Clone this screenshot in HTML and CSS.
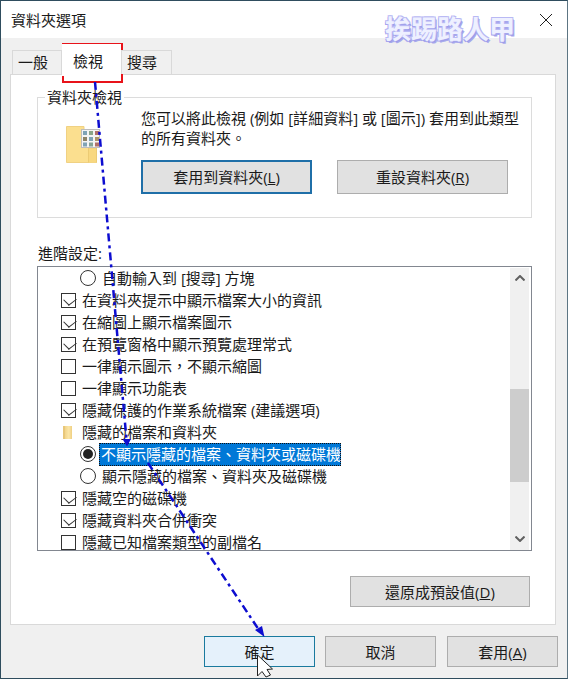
FILE: index.html
```html
<!DOCTYPE html>
<html lang="zh-Hant">
<head>
<meta charset="utf-8">
<title>資料夾選項</title>
<link rel="stylesheet" href="styles.css">
</head>
<body>
<div class="window">
  <header class="titlebar">
    <span class="title">資料夾選項</span>
    <svg class="close" width="14" height="14" viewBox="0 0 14 14"><path d="M1 1L13 13M13 1L1 13" stroke="#222" stroke-width="1" fill="none"/></svg>
  </header>
  <div class="client">
    <div class="tabs">
      <div class="tab">一般</div>
      <div class="tab active">檢視</div>
      <div class="tab">搜尋</div>
    </div>
    <div class="panel">
      <fieldset class="group">
        <legend>資料夾檢視</legend>
        <div class="group-inner">
          <svg class="folder-icon" width="35" height="37" viewBox="0 0 35 37">
            <path d="M0.500 0.500H18V6H30.500V36.500H0.500Z" fill="#fbdf8f" stroke="#f0d183"/>
            <path d="M22.500 36.500V22H30.500V36.500" fill="#f8d880" stroke="#eccb74"/>
            <rect x="15.500" y="3.500" width="18" height="18" fill="#f4f4f4" stroke="#bdbdbd"/>
            <rect x="17" y="5" width="4" height="4" fill="#7fa3b5"/><rect x="23" y="5" width="4" height="4" fill="#8aa588"/><rect x="29" y="5" width="4" height="4" fill="#b0706a"/>
            <rect x="17" y="11" width="4" height="4" fill="#8d8468"/><rect x="23" y="11" width="4" height="4" fill="#7fa3b5"/><rect x="29" y="11" width="4" height="4" fill="#ad9468"/>
            <rect x="17" y="16.500" width="4" height="4" fill="#7fa3b5"/><rect x="23" y="16.500" width="4" height="4" fill="#84a396"/><rect x="29" y="16.500" width="4" height="4" fill="#b0706a"/>
          </svg>
          <div class="group-main">
            <p class="desc">您可以將此檢視 (例如 [詳細資料] 或 [圖示]) 套用到此類型<br>的所有資料夾。</p>
            <div class="group-buttons">
              <button class="btn btn-wide btn-default">套用到資料夾(<u>L</u>)</button>
              <button class="btn btn-wide">重設資料夾(<u>R</u>)</button>
            </div>
          </div>
        </div>
      </fieldset>
      <div class="adv-label">進階設定:</div>
      <div class="list">
        <div class="rows">
          <div class="row level2"><span class="radio"></span><span>自動輸入到 [搜尋] 方塊</span></div>
          <div class="row"><span class="check on"></span><span>在資料夾提示中顯示檔案大小的資訊</span></div>
          <div class="row"><span class="check on"></span><span>在縮圖上顯示檔案圖示</span></div>
          <div class="row"><span class="check on"></span><span>在預覽窗格中顯示預覽處理常式</span></div>
          <div class="row"><span class="check"></span><span>一律顯示圖示，不顯示縮圖</span></div>
          <div class="row"><span class="check"></span><span>一律顯示功能表</span></div>
          <div class="row"><span class="check on"></span><span>隱藏保護的作業系統檔案 (建議選項)</span></div>
          <div class="row"><span class="mini-folder"></span><span>隱藏的檔案和資料夾</span></div>
          <div class="row level2"><span class="radio on"></span><span class="selected">不顯示隱藏的檔案、資料夾或磁碟機</span></div>
          <div class="row level2"><span class="radio"></span><span>顯示隱藏的檔案、資料夾及磁碟機</span></div>
          <div class="row"><span class="check on"></span><span>隱藏空的磁碟機</span></div>
          <div class="row"><span class="check on"></span><span>隱藏資料夾合併衝突</span></div>
          <div class="row"><span class="check"></span><span>隱藏已知檔案類型的副檔名</span></div>
        </div>
        <div class="scrollbar">
          <svg class="arrow" width="10" height="6" viewBox="0 0 10 6"><path d="M0.500 5.500L5 1L9.500 5.500" stroke="#606060" stroke-width="2" fill="none"/></svg>
          <div class="track"><div class="thumb"></div></div>
          <svg class="arrow" width="10" height="6" viewBox="0 0 10 6"><path d="M0.500 0.500L5 5L9.500 0.500" stroke="#606060" stroke-width="2" fill="none"/></svg>
        </div>
      </div>
      <div class="restore-row">
        <button class="btn btn-restore">還原成預設值(<u>D</u>)</button>
      </div>
    </div>
    <div class="actions">
      <button class="btn btn-act btn-hover">確定</button>
      <button class="btn btn-act">取消</button>
      <button class="btn btn-act">套用(<u>A</u>)</button>
    </div>
  </div>
</div>

<div class="watermark">挨踢路人甲</div>
<div class="red-box"></div>
<svg class="annot" width="568" height="679" viewBox="0 0 568 679">
  <path d="M95 82L126.500 440" class="dash"/>
  <path d="M122.500 439L127 446.500L131 439Z" fill="#0d0dd0"/>
  <path d="M148 463L259 630" class="dash"/>
  <path d="M255 630L264.500 637L262 626Z" fill="#0d0dd0"/>
  <path d="M257.500 655V676L262 671.500L266 677L270.500 675L267 669.500L272.500 669Z" fill="#fff" stroke="#222" stroke-width="1" stroke-linejoin="round"/>
</svg>
</body>
</html>
```

FILE: styles.css
```css
* { box-sizing: border-box; }
html, body { margin: 0; padding: 0; }
body {
  position: relative;
  width: 568px;
  height: 679px;
  overflow: hidden;
  background: #fff;
  color: #1a1a1a;
  font-family: "Open Sans", "Noto Sans CJK TC", "Liberation Sans", sans-serif;
  font-size: 15px;
  line-height: 20px;
}
.window {
  width: 568px;
  height: 679px;
  display: flex;
  flex-direction: column;
  border: 1px solid #2f4d5e;
  border-right-color: #5d7583;
}
.titlebar {
  height: 37px;
  flex: none;
  background: #fff;
  display: flex;
  align-items: center;
  justify-content: space-between;
  padding: 0 14px 0 10px;
}
.close { display: block; }
.client {
  flex: 1;
  background: #f0f0f0;
  display: flex;
  flex-direction: column;
  padding: 0 9px 0 9px;
}
.tabs {
  display: flex;
  height: 36px;
  padding: 12px 0 0 2px;
  flex: none;
  position: relative;
  z-index: 1;
}
.tab {
  height: 24px;
  width: 51px;
  background: #f0f0f0;
  border: 1px solid #d9d9d9;
  border-bottom: none;
  padding-left: 5px;
  line-height: 23px;
}
.tab:first-child { width: 50px; }
.tab.active {
  width: 59px;
  height: 32px;
  margin-top: -6px;
  background: #fff;
  border: none;
  padding-left: 11px;
  line-height: 34px;
}
.panel {
  width: 546px;
  height: 551px;
  flex: none;
  background: #fff;
  border: 1px solid #d9d9d9;
  padding: 15px 23px 0 26px;
  display: flex;
  flex-direction: column;
}
.group {
  margin: 0;
  padding: 0;
  height: 128px;
  flex: none;
  border: 1px solid #dcdcdc;
  min-width: 0;
}
.group legend {
  margin-left: 7px;
  padding: 0 2px;
  line-height: 14px;
  height: 14px;
}
.group-inner {
  display: flex;
  padding: 4px 0 0 0;
}
.folder-icon { flex: none; margin: 18px 0 0 28px; overflow: visible; }
.group-main { margin-left: 40px; }
.desc { margin: 0; line-height: 20px; white-space: nowrap; }
.group-buttons { display: flex; gap: 25px; margin-top: 12px; }
.btn {
  font: inherit;
  color: #1a1a1a;
  background: #e1e1e1;
  border: 1px solid #adadad;
  padding: 0;
  margin: 0;
  display: block;
}
.btn-wide { width: 171px; height: 34px; }
.btn-default { border: 2px solid #1f6fa8; }
.adv-label { margin-top: 25px; height: 23px; line-height: 20px; padding-left: 1px; }
.list {
  height: 285px;
  flex: none;
  border: 1px solid #828790;
  display: flex;
  overflow: hidden;
  background: #fff;
}
.rows { flex: 1; min-width: 0; overflow: hidden; }
.row {
  height: 22px;
  display: flex;
  align-items: center;
  padding-left: 22px;
  white-space: nowrap;
}
.row.level2 { padding-left: 41px; }
.check {
  width: 15px;
  height: 15px;
  flex: none;
  border: 1px solid #333;
  margin: 0 6px 0 1px;
  background: #fff;
  position: relative;
}
.check.on::after {
  content: "";
  position: absolute;
  left: 3px;
  top: 1px;
  width: 7px;
  height: 9px;
  transform: rotate(45deg) skewX(-8deg);
  border-right: 1px solid #333;
  border-bottom: 1px solid #333;
  transform-origin: 60% 60%;
}
.radio {
  width: 16px;
  height: 16px;
  flex: none;
  border: 1px solid #333;
  border-radius: 50%;
  margin: 0 6px 0 1px;
  background: #fff;
  position: relative;
}
.radio.on::after {
  content: "";
  position: absolute;
  left: 2px;
  top: 2px;
  width: 10px;
  height: 10px;
  border-radius: 50%;
  background: #222;
}
.mini-folder {
  width: 9px;
  height: 13px;
  flex: none;
  margin: 0 10px 0 3px;
  background: linear-gradient(90deg, #f2d48a 0, #fbe6a8 55%, #efcf82 100%);
  border-left: 2px solid #e8c77a;
}
.selected {
  background: #0078d7;
  color: #fff;
  outline: 1px dotted #111;
  outline-offset: -1px;
  padding: 0 0 0 2px;
  margin-left: -3px;
  height: 23px;
  line-height: 23px;
}
.scrollbar {
  flex: none;
  width: 19px;
  margin: 1px 2px 0 0;
  background: #f0f0f0;
  display: flex;
  flex-direction: column;
  align-items: center;
  padding: 7px 0 8px;
}
.arrow { flex: none; display: block; }
.track { flex: 1; width: 19px; padding-top: 108px; }
.thumb { width: 19px; height: 93px; background: #cdcdcd; }
.restore-row { display: flex; justify-content: flex-end; padding: 25px 2px 0 0; }
.btn-restore { width: 180px; height: 31px; }
.actions {
  display: flex;
  justify-content: flex-end;
  gap: 11px;
  padding: 11px 0 0 0;
}
.btn-act { width: 111px; height: 31px; }
.btn-act:first-child { margin-right: -1px; }
.btn-hover { background: #e5f1fb; border-color: #1a7a9e; }

.watermark {
  position: absolute;
  left: 385px;
  top: 10px;
  width: 130px;
  font-size: 26px;
  line-height: 38px;
  font-weight: 700;
  white-space: nowrap;
  color: #eef0ff;
  text-shadow: -1px -1px 0 #b9b9f4, 1px -1px 0 #b9b9f4, -1px 1px 0 #a5a5ec, 1px 1px 0 #9b9be8, 2px 2px 0 #a8a8ec;
}
.red-box {
  position: absolute;
  left: 62px;
  top: 43px;
  width: 61px;
  height: 40px;
  border: 2px solid #e8131a;
}
.annot { position: absolute; left: 0; top: 0; pointer-events: none; }
.dash {
  fill: none;
  stroke: #0d0dd0;
  stroke-width: 2.500;
  stroke-dasharray: 8 4 3 4;
}
```
